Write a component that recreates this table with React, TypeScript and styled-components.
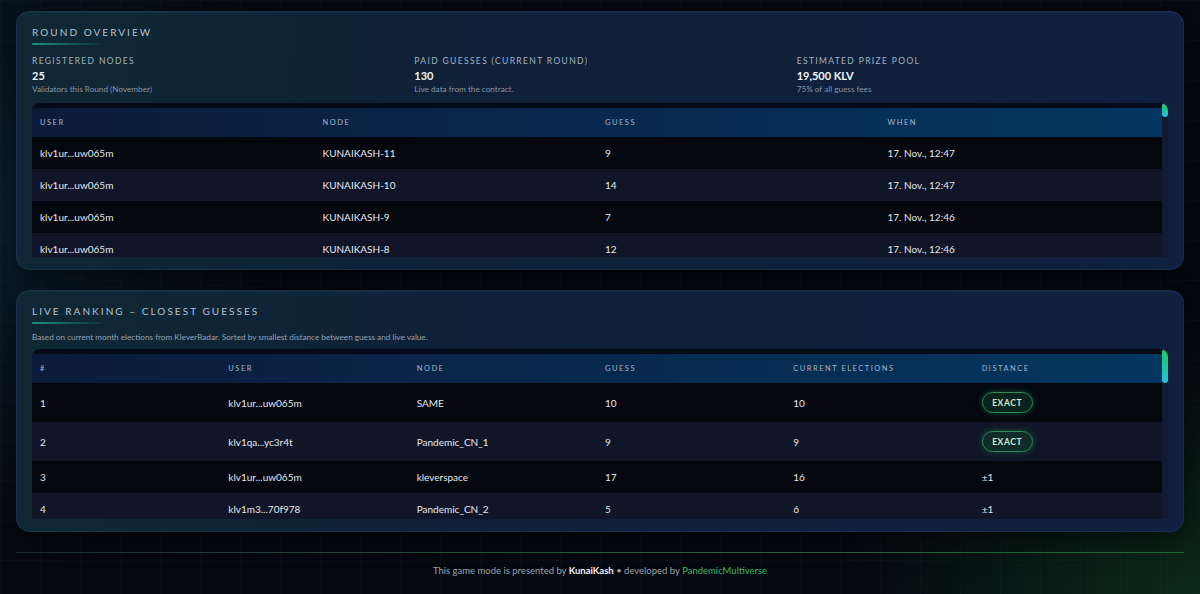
import React from "react";
import styled, { createGlobalStyle } from "styled-components";

const GlobalStyle = createGlobalStyle`
  html, body { margin: 0; padding: 0; }
  body {
    background: #04080f;
    font-family: "Segoe UI", Lato, "Noto Sans", sans-serif;
    color: #e6e9ef;
  }
  * { box-sizing: border-box; }
`;

const Page = styled.div`
  min-height: 594px;
  padding: 11px 16px 0;
  background:
    radial-gradient(ellipse 420px 520px at 0% 35%, rgba(22, 78, 110, 0.32), transparent 70%),
    radial-gradient(ellipse 520px 360px at 100% 100%, rgba(24, 100, 45, 0.38), transparent 70%),
    linear-gradient(rgba(255, 255, 255, 0.018) 1px, transparent 1px),
    linear-gradient(90deg, rgba(255, 255, 255, 0.018) 1px, transparent 1px),
    #04080f;
  background-size: auto, auto, 40px 40px, 40px 40px, auto;
  display: flex;
  flex-direction: column;
  gap: 20px;
`;

const Card = styled.section`
  border-radius: 14px;
  border: 1px solid rgba(90, 150, 210, 0.12);
  background: linear-gradient(100deg, #0f2833 0%, #0f2038 40%, #10203f 100%);
  box-shadow: 0 10px 30px rgba(0, 0, 0, 0.55), inset 0 1px 0 rgba(255, 255, 255, 0.03);
  padding: 13px 15px 12px;
`;

const Title = styled.h2`
  margin: 0;
  font-size: 10px;
  line-height: 15px;
  font-weight: 400;
  letter-spacing: 2.05px;
  color: #b3c2d1;
  text-transform: uppercase;
`;

const Underline = styled.div`
  margin-top: 3px;
  width: 70px;
  height: 2px;
  border-radius: 1px;
  background: linear-gradient(90deg, #1f8f7e, rgba(31, 143, 126, 0.1));
`;

const Stats = styled.div`
  margin-top: 10px;
  display: grid;
  grid-template-columns: repeat(3, 1fr);
  gap: 11px;
`;

const Stat = styled.div`
  display: flex;
  flex-direction: column;
`;

const StatLabel = styled.div`
  font-size: 8.5px;
  line-height: 12px;
  letter-spacing: 1.35px;
  color: #a4b1c0;
  text-transform: uppercase;
`;

const StatValue = styled.div`
  margin-top: 2px;
  font-size: 11px;
  line-height: 14px;
  font-weight: 700;
  color: #f2f4f8;
`;

const StatSub = styled.div`
  margin-top: 1px;
  font-size: 8.2px;
  line-height: 11px;
  color: #8794a5;
`;

const Desc = styled.p`
  margin: 8px 0 0;
  font-size: 8.2px;
  line-height: 11px;
  color: #95a2b3;
`;

const TableFrame = styled.div<{ $h: number; $mt: number }>`
  margin-top: ${(p) => p.$mt}px;
  height: ${(p) => p.$h}px;
  display: flex;
  border-radius: 8px 8px 0 0;
  overflow: hidden;
  background: #050a18;
`;

const TableScroll = styled.div`
  flex: 1;
  min-width: 0;
  overflow-y: auto;
  scrollbar-width: none;
  padding-top: 5px;
  &::-webkit-scrollbar { display: none; }
`;

const Track = styled.div`
  width: 6px;
  flex: none;
  background: #121b31;
`;

const Thumb = styled.div<{ $h: number }>`
  height: ${(p) => p.$h}px;
  border-radius: 3px;
  background: linear-gradient(180deg, #22c55e, #22c3d8);
`;

const Table = styled.table`
  width: 100%;
  border-collapse: collapse;
  table-layout: fixed;
`;

const Th = styled.th`
  text-align: left;
  height: 29px;
  padding: 0 8px;
  font-size: 7.5px;
  font-weight: 400;
  letter-spacing: 1.5px;
  color: #a3b4cc;
  text-transform: uppercase;
`;

const HeadRow = styled.tr`
  background: linear-gradient(90deg, #0c1b3a 0%, #082a50 55%, #04365f 100%);
`;

const Row = styled.tr`
  background: #05070f;
  &:nth-child(even) { background: #101627; }
`;

const Td = styled.td`
  padding: 8px;
  height: 32px;
  font-size: 10px;
  line-height: 16px;
  color: #e4e8ee;
  white-space: nowrap;
`;

const BadgeTd = styled(Td)`
  padding: 9px 8px;
  height: 39px;
`;

const Badge = styled.span`
  display: inline-flex;
  vertical-align: middle;
  align-items: center;
  justify-content: center;
  height: 21px;
  width: 51px;
  border-radius: 999px;
  border: 1px solid #2c8d55;
  background: rgba(18, 70, 45, 0.45);
  box-shadow: 0 0 6px rgba(40, 200, 100, 0.35);
  font-size: 8.5px;
  font-weight: 700;
  letter-spacing: 0.6px;
  color: #cdebd8;
`;

const Footer = styled.footer`
  border-top: 1px solid;
  border-image: linear-gradient(90deg, rgba(70, 110, 95, 0.35), rgba(50, 140, 85, 0.7) 60%, rgba(40, 150, 80, 0.6)) 1;
  padding: 12px 0 14px;
  text-align: center;
  font-size: 9.5px;
  line-height: 12px;
  color: #9ba4ae;
`;

const Strong = styled.b`
  color: #eef1f5;
  font-weight: 700;
`;

const Green = styled.span`
  color: #3cba64;
`;

type Guess = { node: string; guess: number; when: string };

const guesses: Guess[] = [
  { node: "KUNAIKASH-11", guess: 9, when: "17. Nov., 12:47" },
  { node: "KUNAIKASH-10", guess: 14, when: "17. Nov., 12:47" },
  { node: "KUNAIKASH-9", guess: 7, when: "17. Nov., 12:46" },
  { node: "KUNAIKASH-8", guess: 12, when: "17. Nov., 12:46" },
];
for (let i = 7; guesses.length < 52; i--) {
  const n = i > 0 ? i : 30 + i;
  guesses.push({ node: `KUNAIKASH-${n}`, guess: ((n * 3) % 20) + 3, when: "17. Nov., 12:45" });
}

type Rank = { user: string; node: string; guess: number; cur: number; dist: number };

const ranks: Rank[] = [
  { user: "klv1ur...uw065m", node: "SAME", guess: 10, cur: 10, dist: 0 },
  { user: "klv1qa...yc3r4t", node: "Pandemic_CN_1", guess: 9, cur: 9, dist: 0 },
  { user: "klv1ur...uw065m", node: "kleverspace", guess: 17, cur: 16, dist: 1 },
  { user: "klv1m3...70f978", node: "Pandemic_CN_2", guess: 5, cur: 6, dist: 1 },
];
for (let i = 5; ranks.length < 24; i++) {
  ranks.push({
    user: "klv1ur...uw065m",
    node: `KUNAIKASH-${i}`,
    guess: 10 + i,
    cur: 10 + Math.floor(i / 2),
    dist: Math.ceil(i / 2),
  });
}

export default function App() {
  return (
    <>
      <GlobalStyle />
      <Page>
        <Card>
          <Title>Round Overview</Title>
          <Underline />
          <Stats>
            <Stat>
              <StatLabel>Registered Nodes</StatLabel>
              <StatValue>25</StatValue>
              <StatSub>Validators this Round (November)</StatSub>
            </Stat>
            <Stat>
              <StatLabel>Paid Guesses (Current Round)</StatLabel>
              <StatValue>130</StatValue>
              <StatSub>Live data from the contract.</StatSub>
            </Stat>
            <Stat>
              <StatLabel>Estimated Prize Pool</StatLabel>
              <StatValue>19,500 KLV</StatValue>
              <StatSub>75% of all guess fees</StatSub>
            </Stat>
          </Stats>
          <TableFrame $h={154} $mt={8}>
            <TableScroll>
              <Table>
                <thead>
                  <HeadRow>
                    <Th>User</Th>
                    <Th>Node</Th>
                    <Th>Guess</Th>
                    <Th>When</Th>
                  </HeadRow>
                </thead>
                <tbody>
                  {guesses.map((g, i) => (
                    <Row key={i}>
                      <Td>klv1ur...uw065m</Td>
                      <Td>{g.node}</Td>
                      <Td>{g.guess}</Td>
                      <Td>{g.when}</Td>
                    </Row>
                  ))}
                </tbody>
              </Table>
            </TableScroll>
            <Track>
              <Thumb $h={14} />
            </Track>
          </TableFrame>
        </Card>

        <Card>
          <Title>Live Ranking – Closest Guesses</Title>
          <Underline />
          <Desc>
            Based on current month elections from KleverRadar. Sorted by smallest distance between guess and live value.
          </Desc>
          <TableFrame $h={170} $mt={6}>
            <TableScroll>
              <Table>
                <thead>
                  <HeadRow>
                    <Th>#</Th>
                    <Th>User</Th>
                    <Th>Node</Th>
                    <Th>Guess</Th>
                    <Th>Current Elections</Th>
                    <Th>Distance</Th>
                  </HeadRow>
                </thead>
                <tbody>
                  {ranks.map((r, i) => (
                    <Row key={i}>
                      <Td>{i + 1}</Td>
                      <Td>{r.user}</Td>
                      <Td>{r.node}</Td>
                      <Td>{r.guess}</Td>
                      <Td>{r.cur}</Td>
                      {r.dist === 0 ? (
                        <BadgeTd>
                          <Badge>EXACT</Badge>
                        </BadgeTd>
                      ) : (
                        <Td>±{r.dist}</Td>
                      )}
                    </Row>
                  ))}
                </tbody>
              </Table>
            </TableScroll>
            <Track>
              <Thumb $h={34} />
            </Track>
          </TableFrame>
        </Card>

        <Footer>
          This game mode is presented by <Strong>KunaiKash</Strong> • developed by <Green>PandemicMultiverse</Green>
        </Footer>
      </Page>
    </>
  );
}
